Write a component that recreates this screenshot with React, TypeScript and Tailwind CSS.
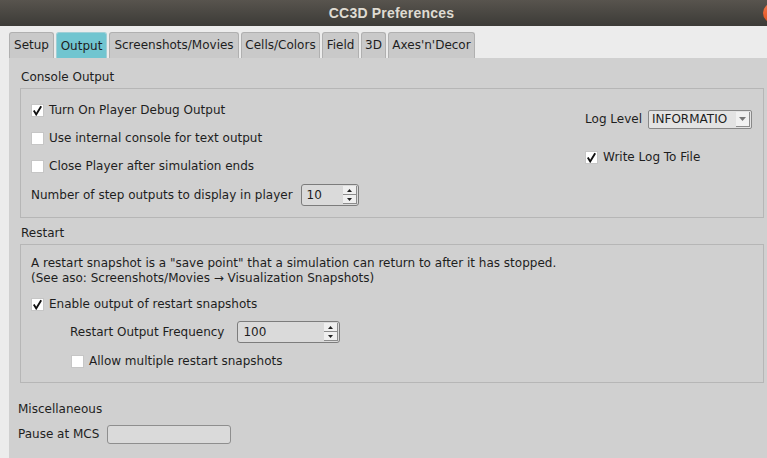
import React from "react";

function Check({ checked }: { checked?: boolean }) {
  return (
    <span className="flex h-[13px] w-[13px] shrink-0 items-center justify-center border border-[#c6c6c6] bg-white">
      {checked && (
        <svg width="11" height="11" viewBox="0 0 11 11">
          <path d="M1.8 5.6 L4.2 9.4 L9.2 1.2" fill="none" stroke="#111" strokeWidth="1.9" />
        </svg>
      )}
    </span>
  );
}

function CheckRow({ label, checked, className = "" }: { label: string; checked?: boolean; className?: string }) {
  return (
    <div className={`flex items-center gap-[5px] ${className}`}>
      <Check checked={checked} />
      <span>{label}</span>
    </div>
  );
}

function Spin({ value, className = "" }: { value: string; className?: string }) {
  return (
    <div className={`flex h-[22px] items-stretch rounded-[3px] border border-[#7c7c7c] bg-[#dadada] ${className}`}>
      <span className="flex flex-1 items-center pl-[5px]">{value}</span>
      <div className="my-[1px] mr-[1px] flex w-[14px] flex-col">
        <div className="flex flex-1 items-center justify-center border-r border-b border-[#8c8c8c] bg-[#efefef]">
          <svg width="5" height="3" viewBox="0 0 5 3">
            <path d="M0 3 L2.5 0 L5 3 Z" fill="#222" />
          </svg>
        </div>
        <div className="flex flex-1 items-center justify-center border-r border-b border-[#8c8c8c] bg-[#efefef]">
          <svg width="5" height="3" viewBox="0 0 5 3">
            <path d="M0 0 L2.5 3 L5 0 Z" fill="#222" />
          </svg>
        </div>
      </div>
    </div>
  );
}

const tabs = [
  { name: "Setup", w: "w-[45px]" },
  { name: "Output", w: "w-[51px]", active: true },
  { name: "Screenshots/Movies", w: "w-[130px]" },
  { name: "Cells/Colors", w: "w-[79px]" },
  { name: "Field", w: "w-[37px]" },
  { name: "3D", w: "w-[25px]" },
  { name: "Axes'n'Decor", w: "w-[87px]" },
];

export default function App() {
  return (
    <div className="relative h-[458px] w-[767px] overflow-hidden bg-[#ececec] font-['DejaVu_Sans',sans-serif] text-[12px] leading-[15px] text-[#1e1e1e]">
      {/* title bar */}
      <div className="relative flex h-[26px] items-center justify-center bg-gradient-to-b from-[#58544e] to-[#3c3b37] pl-[16px]">
        <span className="font-['Liberation_Sans',sans-serif] text-[14px] font-bold tracking-[0.2px] text-[#dfdbd2]">
          CC3D Preferences
        </span>
        <span className="absolute top-[3px] left-[763px] h-[20px] w-[20px] rounded-full bg-gradient-to-b from-[#f4784a] to-[#df4f1a]" />
      </div>

      {/* tabs */}
      <div className="flex h-[32px] items-end gap-[2px] pl-[9px]">
        {tabs.map((t) => (
          <div
            key={t.name}
            className={`flex h-[26px] items-center justify-center rounded-t-[3px] border border-b-0 ${t.w} ${
              t.active ? "border-[#9fcfd6] bg-[#71c5d0] pt-[2px]" : "border-[#b0b0b0] bg-[#c9c9c9]"
            }`}
          >
            {t.name}
          </div>
        ))}
      </div>

      <div className="flex h-[400px]">
        <div className="w-[9px] bg-[#ececec]" />
        <div className="flex-1 bg-[#d0d0d0] pl-[11px]">
          {/* Console Output */}
          <div className="mt-[12px] ml-[1px]">Console Output</div>
          <div className="mt-[3px] flex h-[130px] w-[744px] border border-[#b6b6b6]">
            <div className="flex flex-col pt-[7px] pl-[10px]">
              <CheckRow className="h-[28px]" checked label="Turn On Player Debug Output" />
              <CheckRow className="h-[28px]" label="Use internal console for text output" />
              <CheckRow className="h-[28px]" label="Close Player after simulation ends" />
              <div className="mt-[1px] flex h-[28px] items-center">
                <span>Number of step outputs to display in player</span>
                <Spin value="10" className="ml-[8px] w-[58px]" />
              </div>
            </div>
            <div className="ml-auto flex flex-col pt-[21px] pr-[11px]">
              <div className="flex h-[19px] items-center">
                <span>Log Level</span>
                <div className="ml-[6px] flex h-[19px] w-[104px] items-center rounded-[2px] border border-[#888] bg-[#e3e3e3] pl-[3px]">
                  <span className="flex-1">INFORMATIO</span>
                  <div className="mr-[1px] flex h-[15px] w-[14px] items-center justify-center border-r border-b border-[#8c8c8c] bg-[#f1f1f1]">
                    <svg width="7" height="4" viewBox="0 0 7 4">
                      <path d="M0 0 L3.5 4 L7 0 Z" fill="#777" />
                    </svg>
                  </div>
                </div>
              </div>
              <CheckRow className="mt-[21px]" checked label="Write Log To File" />
            </div>
          </div>

          {/* Restart */}
          <div className="mt-[8px] ml-[1px]">Restart</div>
          <div className="mt-[3px] h-[139px] w-[744px] border border-[#b6b6b6] pt-[11px] pl-[10px]">
            <p>
              A restart snapshot is a "save point" that a simulation can return to after it has stopped.
              <br />
              (See aso: Screenshots/Movies → Visualization Snapshots)
            </p>
            <CheckRow className="mt-[11px]" checked label="Enable output of restart snapshots" />
            <div className="mt-[9px] ml-[39px] flex items-center">
              <span>Restart Output Frequency</span>
              <Spin value="100" className="ml-[13px] w-[103px]" />
            </div>
            <CheckRow className="mt-[11px] ml-[40px]" label="Allow multiple restart snapshots" />
          </div>

          {/* Miscellaneous */}
          <div className="mt-[19px] -ml-[2px]">Miscellaneous</div>
          <div className="mt-[8px] -ml-[2px] flex items-center">
            <span>Pause at MCS</span>
            <div className="ml-[8px] h-[19px] w-[124px] rounded-[3px] border border-[#8e8e8e] bg-[#dadada]" />
          </div>
        </div>
      </div>
    </div>
  );
}
